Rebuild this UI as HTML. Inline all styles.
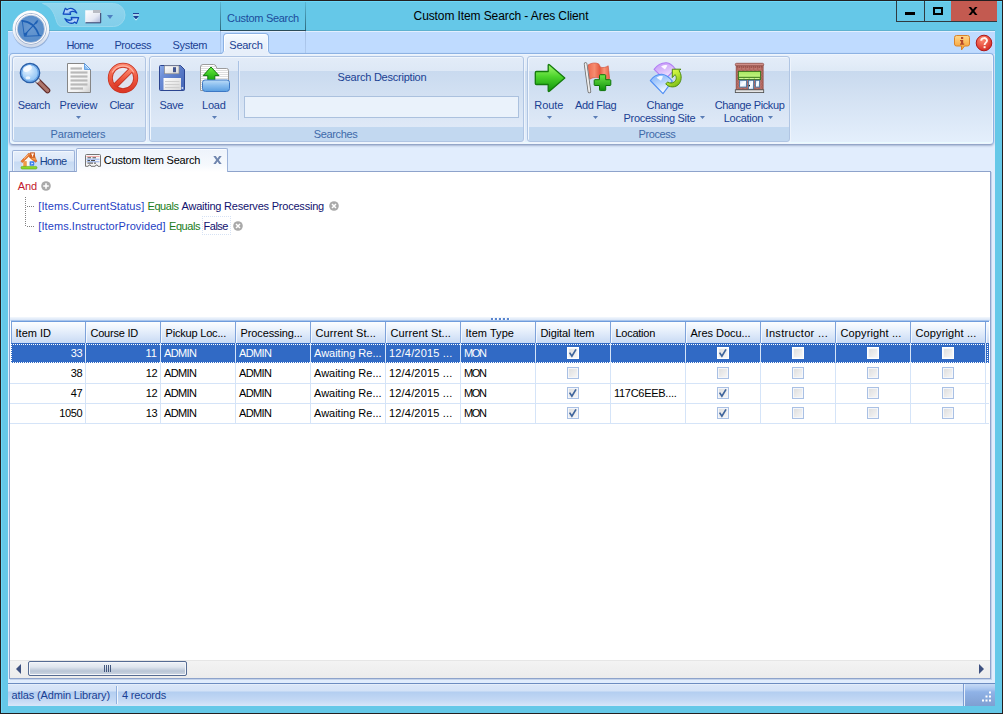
<!DOCTYPE html>
<html>
<head>
<meta charset="utf-8">
<title>Custom Item Search - Ares Client</title>
<style>
*{box-sizing:border-box;margin:0;padding:0}
html,body{width:1003px;height:714px;overflow:hidden}
body{position:relative;background:#65c8e8;font-family:"Liberation Sans",sans-serif;font-size:11px;color:#1a3f93}
.a{position:absolute}
.t{position:absolute;white-space:pre;line-height:14px;height:14px}
.c{text-align:center}
/* frame */
#frame{left:0;top:0;width:1003px;height:714px;border:1px solid #231f20}
#hl{left:1px;top:1px;width:1001px;height:712px;border-top:1px solid #6dd8f9;border-left:1px solid #6dd8f9}
#title{left:301px;top:9px;width:400px;font-size:12px;color:#000;letter-spacing:-0.1px}
/* window buttons */
#wb{left:896px;top:1px;width:101px;height:21px;border:1px solid #2f3a40;border-top:none}
#wb .d{top:0;width:1px;height:20px;background:#2f3a40}
#close{left:54px;top:0;width:46px;height:20px;background:#c35a50}
/* ribbon header */
#tabrow{left:8px;top:30px;width:987px;height:24px;background:#bfdbff;border-top:1px solid #5eb2d0;box-shadow:inset 0 1px 0 #e2efff}
#below{left:8px;top:54px;width:987px;height:652px;background:#bfdbff}
.tab{font-size:11px;color:#1a3f93}
/* ribbon panel */
#rib{left:9px;top:53px;width:985px;height:92px;border:1px solid #8db2e3;border-bottom-color:#94a6c8;border-radius:4px;background:linear-gradient(#e9f1fb 0,#dee9f6 17px,#c8d9ee 17px,#d4e2f3 45px,#e4effc 88px);box-shadow:inset 0 0 0 1px #eef5fd,inset 0 -2px 0 #e8fbff,0 1px 2px rgba(110,130,170,.5)}
.grp{top:56px;height:86px;border:1px solid #b0c5e3;border-radius:3px;background:linear-gradient(#e3ecf8 0,#dde8f6 14px,#c9daef 14px,#d7e4f4 50px,#dfe9f7 70px,#c2d8f0 70px,#c2d8f0 100%);box-shadow:inset 1px 1px 0 #f0f6fd,1px 1px 0 #eef4fc}
.cap{color:#3e6aaa}

#below{background:#e1edfd}
.dt{border:1px solid #9db3d9;border-bottom:none;border-radius:2px 2px 0 0}
#panel{left:9px;top:171px;width:982px;height:508px;border:1px solid #8ea3cb;background:#fff;box-shadow:1px 1px 0 #c3d2ea}
.k{color:#000}
.fn{color:#1f3fc4}.eq{color:#1a7c1a}.vl{color:#12126e}
.gh{color:#000}
.gc{color:#000}.gc.w{color:#fff}
.cb{width:12px;height:12px;border:1px solid #a9c0e4;background:linear-gradient(135deg,#dcdcdc,#f8f8f8);box-shadow:inset 0 0 0 1px #f4f6fa}
.cb.sel{border-color:#fff}
.cb svg{position:absolute;left:-1px;top:-1px}
</style>
</head>
<body>
<div class="a" id="frame"></div>
<div class="a" id="hl"></div>
<div class="t c" id="title">Custom Item Search - Ares Client</div>

<!-- window buttons -->
<div class="a" id="wb">
  <div class="a d" style="left:27px"></div>
  <div class="a" id="close"></div>
  <div class="a" style="left:8px;top:11px;width:10px;height:3px;background:#000"></div>
  <div class="a" style="left:36px;top:6px;width:10px;height:8px;border:2px solid #000"></div>
  <svg class="a" style="left:71px;top:6px" width="10" height="8" viewBox="0 0 10 8"><path d="M0.5 0H3L5 2.6L7 0H9.5L6.3 4L9.5 8H7L5 5.4L3 8H0.5L3.7 4Z" fill="#000"/></svg>
</div>

<div class="a" id="tabrow"></div>
<div class="a" id="below"></div>



<!-- app button -->
<svg class="a" style="z-index:5;left:10px;top:8px" width="42" height="42" viewBox="0 0 42 42">
 <defs>
  <linearGradient id="ab1" x1="0" y1="0" x2="0" y2="1"><stop offset="0" stop-color="#ffffff"/><stop offset="0.55" stop-color="#f2f5fa"/><stop offset="1" stop-color="#cbd6e8"/></linearGradient>
  <radialGradient id="ab2" cx="0.5" cy="0.45" r="0.7"><stop offset="0" stop-color="#6a9ad2"/><stop offset="1" stop-color="#5288c6"/></radialGradient>
 </defs>
 <circle cx="21.2" cy="21.6" r="18.8" fill="#4f6fa0" opacity="0.4"/>
 <circle cx="20.9" cy="20.9" r="18.4" fill="url(#ab1)"/>
 <circle cx="20.9" cy="20.9" r="15.5" fill="none" stroke="#9fb1cf" stroke-width="0.9"/>
 <circle cx="20.9" cy="20.9" r="14.5" fill="none" stroke="#ffffff" stroke-width="1"/>
 <circle cx="20.9" cy="20.9" r="13.6" fill="none" stroke="#a4b6d4" stroke-width="0.8"/>
 <circle cx="20.9" cy="20.9" r="13.1" fill="url(#ab2)"/>
 <g fill="none" stroke="#1d5fb4" stroke-linecap="round">
  <path d="M12.2 12.8 Q24 13.6 28.9 27" stroke-width="1.7"/>
  <path d="M12.2 12.5 L14.4 28.3 L30.9 27.6" stroke-width="0.9"/>
  <path d="M15.7 25.7 L26.4 14.1" stroke-width="1.1"/>
 </g>
 <path d="M27.8 12.4 C27.6 14.4 26.6 15.6 25 16 C25.2 14.2 26.2 13 27.8 12.4 Z" fill="#1d5fb4" stroke="#1d5fb4" stroke-width="0.6"/>
 <path d="M13.8 25.2 L17.6 24.2 L16.6 27.8 L14.4 28 Z" fill="#1d5fb4"/>
</svg>

<!-- QAT -->
<svg class="a" style="left:36px;top:2px" width="92" height="26" viewBox="0 0 92 26">
 <defs><linearGradient id="qp" x1="0" y1="0" x2="0" y2="1"><stop offset="0" stop-color="#90d5ed"/><stop offset="1" stop-color="#82ceea"/></linearGradient></defs>
 <path d="M6.5 1.5 H77.5 A11.5 11.5 0 0 1 77.5 24.5 H26 C20 24.5 21 17 17 10 C14 5 10 2.5 6.5 1.5 Z" fill="url(#qp)" stroke="#97d8ee" stroke-width="1"/>
</svg>
<!-- refresh icon -->
<svg class="a" style="left:62px;top:7px" width="18" height="18" viewBox="0 0 18 18">
 <defs><linearGradient id="rf" x1="0" y1="0" x2="1" y2="1"><stop offset="0" stop-color="#ffffff"/><stop offset="0.5" stop-color="#9cc8f8"/><stop offset="1" stop-color="#3c84e4"/></linearGradient></defs>
 <path d="M1.2 7 L3.3 1.3 L5 2.8 C8.2 0.2 12.8 1.4 14.8 6 C12.2 4.2 9.6 4.2 8 5.2 L8.6 7.4 Z" fill="url(#rf)" stroke="#124cc0" stroke-width="1.3" stroke-linejoin="round"/>
 <g transform="rotate(180 8.9 8.85)"><path d="M1.2 7 L3.3 1.3 L5 2.8 C8.2 0.2 12.8 1.4 14.8 6 C12.2 4.2 9.6 4.2 8 5.2 L8.6 7.4 Z" fill="url(#rf)" stroke="#124cc0" stroke-width="1.3" stroke-linejoin="round"/></g>
</svg>
<!-- window/folder icon -->
<svg class="a" style="left:85px;top:9px" width="17" height="15" viewBox="0 0 17 15">
 <defs><linearGradient id="fo" x1="0" y1="0" x2="1" y2="1"><stop offset="0" stop-color="#ffffff"/><stop offset="0.6" stop-color="#e4e8f4"/><stop offset="1" stop-color="#a9b4d6"/></linearGradient></defs>
 <path d="M0.5 1.5H8V4H15.5V13.5H0.5Z" fill="url(#fo)" stroke="#f4f7fc" stroke-width="0.6"/>
 <rect x="8" y="1" width="7.5" height="3" fill="#b9bcc4"/>
 <path d="M0.5 13.8H15.7V4" fill="none" stroke="#2a3566" stroke-width="1"/>
</svg>
<svg class="a" style="left:107px;top:15px" width="6" height="4" viewBox="0 0 6 4"><path d="M0 0H6L3 4Z" fill="#4d7fc0"/></svg>
<svg class="a" style="left:133px;top:13px" width="6" height="8" viewBox="0 0 6 8"><rect x="0" y="0" width="6" height="1.3" fill="#1f3f95"/><rect x="0" y="1.4" width="6" height="1" fill="#e8f4fb"/><path d="M0 3H6L3 6.3Z" fill="#1f3f95"/><path d="M0 4.3L3 7.6L6 4.3L3 6.6Z" fill="#f4fbff"/></svg>

<!-- context tab -->
<div class="a" style="left:220px;top:2px;width:1px;height:52px;background:linear-gradient(#5ab6d4,#2f6a7e 28px,#a5c0e6 29px,#afcaee)"></div>
<div class="a" style="left:305px;top:2px;width:1px;height:52px;background:linear-gradient(#5ab6d4,#2f6a7e 28px,#a5c0e6 29px,#afcaee)"></div>
<div class="a" style="left:220px;top:30px;width:86px;height:1px;background:#2a4c5a"></div>
<div class="t c" style="left:221px;top:11px;width:84px;color:#1c4c9c;letter-spacing:-0.3px">Custom Search</div>

<!-- ribbon tabs -->
<div class="t tab" style="left:66.6px;top:38px;letter-spacing:-0.68px">Home</div>
<div class="t tab" style="left:114.5px;top:38px;letter-spacing:-0.47px">Process</div>
<div class="t tab" style="left:172.6px;top:38px;letter-spacing:-0.35px">System</div>
<div class="a" style="z-index:3;left:223px;top:33px;width:46px;height:18px;border:1px solid #8db2e3;border-bottom:none;border-radius:4px 4px 0 0;background:linear-gradient(#f7fbff,#e9f1fb 60%,#e7effa);box-shadow:inset 1px 1px 0 #fff,inset -1px 0 0 #f4f9ff"></div><div class="a" style="z-index:3;left:224px;top:51px;width:44px;height:4px;background:#e7effa"></div>
<div class="t tab" style="z-index:4;left:229.3px;top:38px;letter-spacing:-0.25px">Search</div>

<svg class="a" style="z-index:4;left:220px;top:50px" width="4" height="4" viewBox="0 0 4 4"><path d="M0 4 H4 V0 C4 2.5 2.5 4 0 4 Z" fill="#e6effa"/><path d="M0 3.5 C2.2 3.5 3.5 2.2 3.5 0" fill="none" stroke="#8db2e3" stroke-width="1"/></svg>
<svg class="a" style="z-index:4;left:268px;top:50px" width="4" height="4" viewBox="0 0 4 4"><path d="M4 4 H0 V0 C0 2.5 1.5 4 4 4 Z" fill="#e6effa"/><path d="M4 3.5 C1.8 3.5 0.5 2.2 0.5 0" fill="none" stroke="#8db2e3" stroke-width="1"/></svg>
<!-- help icons -->
<svg class="a" style="left:953px;top:34px" width="18" height="18" viewBox="0 0 18 18">
 <defs><linearGradient id="ib" x1="0" y1="0" x2="0" y2="1"><stop offset="0" stop-color="#ffd78a"/><stop offset="1" stop-color="#f59a2c"/></linearGradient></defs>
 <path d="M3.5 1.5H14.5Q16.5 1.5 16.5 3.5V10Q16.5 12 14.5 12H11.5L8.5 16V12H3.5Q1.5 12 1.5 10V3.5Q1.5 1.5 3.5 1.5Z" fill="url(#ib)" stroke="#d9822a" stroke-width="1"/>
 <rect x="8" y="3" width="2.2" height="2" fill="#b5482a"/><path d="M7 6H10.2V9.5H11.2V10.8H7V9.5H8V7.3H7Z" fill="#b5482a"/>
</svg>
<svg class="a" style="left:975px;top:34px" width="18" height="18" viewBox="0 0 18 18">
 <defs><radialGradient id="hb" cx="0.4" cy="0.3" r="0.8"><stop offset="0" stop-color="#ff8a70"/><stop offset="1" stop-color="#d0201a"/></radialGradient></defs>
 <circle cx="9" cy="9" r="7.8" fill="url(#hb)" stroke="#b01818" stroke-width="1"/>
 <path d="M6.2 6.8C6.2 3.2 12 3.2 12 6.6C12 8.6 9.6 8.8 9.6 11" fill="none" stroke="#fff4ec" stroke-width="1.9"/><rect x="8.6" y="12.2" width="2" height="2" fill="#fff4ec"/>
</svg>

<!-- ribbon -->
<div class="a" id="rib"></div>
<div class="a grp" style="left:12px;width:134px"></div>
<div class="a grp" style="left:149px;width:375px"></div>
<div class="a grp" style="left:527px;width:263px"></div>


<!-- ===== ribbon icons ===== -->
<!-- Search magnifier -->
<svg class="a" style="left:19px;top:62px" width="33" height="33" viewBox="0 0 33 33">
 <defs>
  <radialGradient id="mg" cx="0.4" cy="0.35" r="0.8"><stop offset="0" stop-color="#e8f4ff"/><stop offset="0.5" stop-color="#a9d2f8"/><stop offset="1" stop-color="#78b4f0"/></radialGradient>
  <linearGradient id="mh" x1="0" y1="1" x2="1" y2="0"><stop offset="0" stop-color="#6d2f2c"/><stop offset="0.5" stop-color="#b07a70"/><stop offset="1" stop-color="#7a3a34"/></linearGradient>
 </defs>
 <path d="M19 19 L28.5 28.5" stroke="#5c2624" stroke-width="5.6" stroke-linecap="round"/>
 <path d="M19 19 L28.5 28.5" stroke="url(#mh)" stroke-width="3.6" stroke-linecap="round"/>
 <path d="M16.8 16.8 L19.6 19.6" stroke="#8a8f9c" stroke-width="5"/>
 <path d="M16.8 16.8 L19.6 19.6" stroke="#dfe3ea" stroke-width="3.4"/>
 <circle cx="11" cy="11" r="9.6" fill="url(#mg)" stroke="#2a5fa8" stroke-width="1.5"/>
 <circle cx="11" cy="11" r="8.3" fill="none" stroke="#5e9fe6" stroke-width="1"/>
 <ellipse cx="8.5" cy="6.5" rx="4.6" ry="2.8" fill="#fff" opacity="0.8" transform="rotate(-25 8.5 6.5)"/>
 <ellipse cx="9" cy="15.8" rx="2.4" ry="1.5" fill="#fff" opacity="0.75"/>
</svg>
<!-- Preview doc -->
<svg class="a" style="left:66px;top:62px" width="27" height="33" viewBox="0 0 27 33">
 <defs><linearGradient id="pg" x1="0" y1="0" x2="1" y2="1"><stop offset="0" stop-color="#ffffff"/><stop offset="0.7" stop-color="#f2f2f2"/><stop offset="1" stop-color="#cdcdcd"/></linearGradient></defs>
 <path d="M1.5 1.5 H18.5 L24.5 7.5 V30.5 H1.5 Z" fill="url(#pg)" stroke="#868686" stroke-width="1"/>
 <path d="M18.5 1.5 L24.5 7.5 H18.5 Z" fill="#8cc0f4" stroke="#4f94e2" stroke-width="0.8"/>
 <path d="M19 3 L23 7" stroke="#e8f4ff" stroke-width="0.8"/>
 <g stroke="#b9b9b9" stroke-width="2.2"><path d="M4.5 6.5H16"/><path d="M4.5 10.5H21.5"/><path d="M4.5 14.5H21.5"/><path d="M4.5 18.5H21.5"/><path d="M4.5 22.5H21.5"/><path d="M4.5 26.5H17"/></g>
</svg>
<!-- Clear -->
<svg class="a" style="left:107px;top:62px" width="33" height="33" viewBox="0 0 33 33">
 <defs><linearGradient id="cl" x1="0" y1="0" x2="0" y2="1"><stop offset="0" stop-color="#fb846c"/><stop offset="0.5" stop-color="#ee5a42"/><stop offset="1" stop-color="#dc3826"/></linearGradient></defs>
 <circle cx="16" cy="16" r="13" fill="#f4e6ea" opacity="0.45"/>
 <path d="M8 24 L24 8" stroke="#c4301e" stroke-width="5.4"/>
 <circle cx="16" cy="16" r="12.7" fill="none" stroke="#c4301e" stroke-width="5"/>
 <circle cx="16" cy="16" r="12.7" fill="none" stroke="url(#cl)" stroke-width="3.6"/>
 <path d="M7.6 24.4 L24.4 7.6" stroke="url(#cl)" stroke-width="4"/>
 <path d="M5.2 10.5 A12.2 12.2 0 0 1 26.8 10.5" fill="none" stroke="#ffc0b0" stroke-width="1.2" opacity="0.8"/>
</svg>
<!-- Save floppy -->
<svg class="a" style="left:158px;top:64px" width="28" height="28" viewBox="0 0 28 28">
 <defs><linearGradient id="fl" x1="0" y1="0" x2="1" y2="0.6"><stop offset="0" stop-color="#8fb0ec"/><stop offset="0.25" stop-color="#6f90d8"/><stop offset="1" stop-color="#4a6cbc"/></linearGradient>
 <linearGradient id="fw" x1="0" y1="0" x2="1" y2="1"><stop offset="0" stop-color="#ffffff"/><stop offset="1" stop-color="#d6d6d6"/></linearGradient></defs>
 <path d="M2.5 1.5 H22.5 L26.5 5.5 V25.5 Q26.5 26.5 25.5 26.5 H2.5 Q1.5 26.5 1.5 25.5 V2.5 Q1.5 1.5 2.5 1.5 Z" fill="url(#fl)" stroke="#2c4590" stroke-width="1"/>
 <rect x="6.5" y="1.8" width="14.5" height="8" fill="url(#fw)" stroke="#8a8a8a" stroke-width="0.7"/>
 <rect x="15" y="3.2" width="3" height="5" fill="#40548e"/>
 <rect x="5.5" y="14" width="17.5" height="12" fill="url(#fw)"/>
 <g stroke="#cfcfcf" stroke-width="1"><path d="M7 17.5H21.5"/><path d="M7 20.5H21.5"/><path d="M7 23.5H21.5"/></g>
 <rect x="23.6" y="23.2" width="1.6" height="1.6" fill="#e8eefc"/>
</svg>
<!-- Load folder -->
<svg class="a" style="left:199px;top:63px" width="32" height="30" viewBox="0 0 32 30">
 <defs><linearGradient id="lf" x1="0" y1="0" x2="0" y2="1"><stop offset="0" stop-color="#bcdcf8"/><stop offset="0.5" stop-color="#86bcee"/><stop offset="1" stop-color="#5a9ee0"/></linearGradient>
 <linearGradient id="ga" x1="0" y1="0" x2="0" y2="1"><stop offset="0" stop-color="#6cf040"/><stop offset="1" stop-color="#10a008"/></linearGradient>
 <pattern id="st" width="2" height="2" patternUnits="userSpaceOnUse"><rect width="2" height="1" fill="#ffffff"/><rect y="1" width="2" height="1" fill="#dedede"/></pattern></defs>
 <path d="M1.5 4 Q1.5 1.5 4 1.5 H14.5 Q16.5 1.5 17.2 3.5 L17.8 5.5 H27.5 Q29.5 5.5 29.5 7.5 V27.5 H1.5 Z" fill="url(#st)" stroke="#9c9c9c" stroke-width="1"/>
 <path d="M12 4 L20 12.6 H15.8 V18 H8.8 V12.6 H4.2 Z" fill="url(#ga)" stroke="#0f7a0a" stroke-width="1" stroke-linejoin="round"/>
 <path d="M3.5 19.5 Q3.5 17 6 17 H28 Q30.5 17 30.5 19.5 V25.5 Q30.5 28.5 27.5 28.5 H6.5 Q3.5 28.5 3.5 25.5 Z" fill="url(#lf)" stroke="#3c78c4" stroke-width="1"/>
</svg>
<!-- Route arrow -->
<svg class="a" style="left:534px;top:63px" width="33" height="30" viewBox="0 0 33 30">
 <defs><linearGradient id="ra" x1="0" y1="0" x2="0" y2="1"><stop offset="0" stop-color="#a4f870"/><stop offset="0.45" stop-color="#4cd42c"/><stop offset="1" stop-color="#0e920a"/></linearGradient></defs>
 <path d="M2.5 8.5 H14.2 V2.2 Q14.2 1 15.4 1.8 L30.8 15 L15.4 28.2 Q14.2 29 14.2 27.8 V21.5 H2.5 Q1.3 21.5 1.3 20.3 V9.7 Q1.3 8.5 2.5 8.5 Z" fill="url(#ra)" stroke="#137a0c" stroke-width="1.3" stroke-linejoin="round"/>
</svg>
<!-- Add Flag -->
<svg class="a" style="left:582px;top:62px" width="31" height="32" viewBox="0 0 31 32">
 <defs><linearGradient id="fg" x1="0" y1="0" x2="1" y2="0"><stop offset="0" stop-color="#ee6a50"/><stop offset="0.3" stop-color="#f68c70"/><stop offset="0.55" stop-color="#e45a40"/><stop offset="0.75" stop-color="#f89678"/><stop offset="1" stop-color="#e8644a"/></linearGradient>
 <linearGradient id="gp" x1="0" y1="0" x2="0" y2="1"><stop offset="0" stop-color="#70e848"/><stop offset="1" stop-color="#0e900a"/></linearGradient></defs>
 <path d="M6 3 C9 0.8 13.5 0.4 16.5 1.8 C17.5 2.6 18 4.4 18.2 5 C20.5 6.2 24 5.4 26.2 3.8 L27.6 16.5 C24.5 19 20.5 19 18.5 17.2 C15.5 14.8 11.5 15 7.8 17.2 Z" fill="url(#fg)" stroke="#cf4a34" stroke-width="0.6"/>
 <path d="M3.6 2 L7.4 29.5" stroke="#707070" stroke-width="3.6" stroke-linecap="round"/>
 <path d="M3.6 2 L7.4 29.5" stroke="#ececec" stroke-width="1.9" stroke-linecap="round"/>
 <path d="M18.3 12.7 H22.9 Q23.7 12.7 23.7 13.5 V17.7 H28 Q28.8 17.7 28.8 18.5 V22.7 Q28.8 23.5 28 23.5 H23.7 V27.8 Q23.7 28.6 22.9 28.6 H18.3 Q17.5 28.6 17.5 27.8 V23.5 H13 Q12.2 23.5 12.2 22.7 V18.5 Q12.2 17.7 13 17.7 H17.5 V13.5 Q17.5 12.7 18.3 12.7 Z" fill="url(#gp)" stroke="#0d7408" stroke-width="1" stroke-linejoin="round"/>
</svg>
<!-- Change Processing Site -->
<svg class="a" style="left:649px;top:61px" width="34" height="34" viewBox="0 0 34 34">
 <defs><linearGradient id="pu" x1="0.2" y1="0" x2="0.7" y2="1"><stop offset="0" stop-color="#c79af8"/><stop offset="0.45" stop-color="#d9bcfb"/><stop offset="1" stop-color="#fbf6ff"/></linearGradient>
 <linearGradient id="bl" x1="0.2" y1="0" x2="0.6" y2="1"><stop offset="0" stop-color="#7fb2fa"/><stop offset="0.45" stop-color="#b4d2fc"/><stop offset="1" stop-color="#ffffff"/></linearGradient>
 <linearGradient id="gr" x1="0" y1="0" x2="0.6" y2="1"><stop offset="0" stop-color="#eeff5c"/><stop offset="0.5" stop-color="#c0ec38"/><stop offset="1" stop-color="#7fc01a"/></linearGradient></defs>
 <path d="M5.1 8.4 C8.5 3.8 13 1.6 17.5 1.8 C21 2.2 24 5 26.3 8 L15.8 18.6 Z" fill="url(#pu)" stroke="#b07cf4" stroke-width="1.1" stroke-linejoin="round"/>
 <path d="M12 5.5 L16 8.5 L18.5 4.5 C16 3.6 14 4 12 5.5 Z" fill="#fff" opacity="0.9"/>
 <path d="M1.3 19.5 C4.5 15 9 13 13 13.2 C17 13.6 20.5 16.5 23.3 20.1 L14 32.6 Z" fill="url(#bl)" stroke="#4f8ef4" stroke-width="1.1" stroke-linejoin="round"/>
 <path d="M7.5 16.8 L12 19.8 L14 15.5 C11.5 14.6 9.5 15.2 7.5 16.8 Z" fill="#fff" opacity="0.9"/>
 <path d="M16.7 22.8 C20 26.8 27 27.2 30.4 22.4 C33 18.4 32.6 13.2 30 9.6 L32 8.2 L23.3 8.2 L23.3 16.6 L26 13.6 C28 16 27.5 19 25.5 20.8 C23.5 22.4 20.5 22.4 18.8 21 Z" fill="url(#gr)" stroke="#4e8c10" stroke-width="1" stroke-linejoin="round"/>
</svg>
<!-- Shop -->
<svg class="a" style="left:734px;top:62px" width="31" height="32" viewBox="0 0 31 32">
 <defs><linearGradient id="aw" x1="0" y1="0" x2="0" y2="1"><stop offset="0" stop-color="#a8e860"/><stop offset="0.5" stop-color="#baf078"/><stop offset="1" stop-color="#96d64c"/></linearGradient>
 <linearGradient id="wn" x1="0" y1="0" x2="1" y2="1"><stop offset="0" stop-color="#b8d8f8"/><stop offset="0.5" stop-color="#ffffff"/><stop offset="1" stop-color="#c4e0fa"/></linearGradient>
 <pattern id="bk" width="4" height="3" patternUnits="userSpaceOnUse"><rect width="4" height="3" fill="#b0645c"/><rect x="0.3" y="0.4" width="2.6" height="1" fill="#c8867e"/><rect x="2.3" y="1.9" width="2.6" height="1" fill="#c07a72" opacity=".7"/></pattern></defs>
 <rect x="2.2" y="3.4" width="26.9" height="24.2" fill="url(#bk)" stroke="#8a443e" stroke-width="0.8"/>
 <rect x="1.3" y="1.3" width="28.4" height="2.5" rx="1.2" fill="#cf8e88" stroke="#8e4c46" stroke-width="0.8"/>
 <path d="M3 5H28" stroke="#8a443e" stroke-width="1" stroke-dasharray="1 1"/>
 <rect x="4.4" y="9.4" width="22.2" height="8.2" fill="url(#aw)" stroke="#3a7620" stroke-width="1"/>
 <path d="M5 15.4H26" stroke="#3a7620" stroke-width="0.9"/>
 <path d="M5.4 16.5H26" stroke="#d4f8a0" stroke-width="0.9" stroke-dasharray="4 1.2"/>
 <rect x="5.6" y="18.3" width="7" height="6.8" fill="url(#wn)" stroke="#46749f" stroke-width="0.9"/>
 <rect x="14.4" y="18.3" width="5.2" height="9" fill="url(#wn)" stroke="#46749f" stroke-width="0.9"/>
 <rect x="21.4" y="18.3" width="4.2" height="6.8" fill="url(#wn)" stroke="#46749f" stroke-width="0.9"/>
 <ellipse cx="15.4" cy="23.6" rx="0.6" ry="0.9" fill="#111"/>
 <rect x="1.3" y="27.8" width="28.4" height="2.8" fill="#e4e4e4" stroke="#4c4c4c" stroke-width="0.8"/>
</svg>


<!-- ribbon labels -->
<div class="t " style="left:17.8px;top:98px;letter-spacing:-0.48px">Search</div>
<div class="t " style="left:59.6px;top:98px;letter-spacing:-0.22px">Preview</div>
<div class="t " style="left:109.5px;top:98px;letter-spacing:-0.40px">Clear</div>
<div class="t cap" style="left:50.6px;top:127px;letter-spacing:-0.21px">Parameters</div>
<div class="t " style="left:159.4px;top:98px;letter-spacing:-0.27px">Save</div>
<div class="t " style="left:202.1px;top:98px;letter-spacing:-0.25px">Load</div>
<div class="t " style="left:337.6px;top:70px;letter-spacing:-0.23px">Search Description</div>
<div class="t cap" style="left:313.8px;top:127px;letter-spacing:-0.36px">Searches</div>
<div class="t " style="left:534.3px;top:98px;letter-spacing:-0.07px">Route</div>
<div class="t " style="left:575.0px;top:98px;letter-spacing:-0.33px">Add Flag</div>
<div class="t " style="left:646.5px;top:98px;letter-spacing:-0.26px">Change</div>
<div class="t " style="left:623.6px;top:111px;letter-spacing:-0.32px">Processing Site</div>
<div class="t " style="left:714.7px;top:98px;letter-spacing:-0.37px">Change Pickup</div>
<div class="t " style="left:723.8px;top:111px;letter-spacing:-0.29px">Location</div>
<div class="t cap" style="left:638.6px;top:127px;letter-spacing:-0.44px">Process</div>
<svg class="a" style="left:76px;top:116px" width="5" height="3" viewBox="0 0 5 3"><path d="M0 0H5L2.5 3Z" fill="#5a7db6"/></svg>
<svg class="a" style="left:212px;top:116px" width="5" height="3" viewBox="0 0 5 3"><path d="M0 0H5L2.5 3Z" fill="#5a7db6"/></svg>
<svg class="a" style="left:547px;top:116px" width="5" height="3" viewBox="0 0 5 3"><path d="M0 0H5L2.5 3Z" fill="#5a7db6"/></svg>
<svg class="a" style="left:593px;top:116px" width="5" height="3" viewBox="0 0 5 3"><path d="M0 0H5L2.5 3Z" fill="#5a7db6"/></svg>
<svg class="a" style="left:700px;top:116px" width="5" height="3" viewBox="0 0 5 3"><path d="M0 0H5L2.5 3Z" fill="#5a7db6"/></svg>
<svg class="a" style="left:768px;top:116px" width="5" height="3" viewBox="0 0 5 3"><path d="M0 0H5L2.5 3Z" fill="#5a7db6"/></svg>

<div class="a" style="left:238px;top:61px;width:1px;height:59px;background:#a9c2e4"></div>
<div class="a" style="left:239px;top:61px;width:1px;height:59px;background:#e6eefa"></div>
<div class="a" style="left:244px;top:96px;width:275px;height:22px;border:1px solid #abc1de;background:#eaf2fb"></div>


<!-- ===== document tabs ===== -->
<div class="a dt" style="left:12px;top:150px;width:63px;height:22px;background:linear-gradient(#e6effb 0,#dbe7f8 10px,#c6daf3 11px,#d2e2f6 100%);box-shadow:inset 1px 1px 0 #f2f7fd"></div>
<div class="a" id="panel"></div>
<div class="a dt" style="left:76px;top:148px;width:152px;height:24px;background:linear-gradient(#eef3fb,#f6f9fd 70%,#fff);box-shadow:inset 1px 1px 0 #fbfdff"></div>
<div class="t" style="left:39.7px;top:154px;color:#15428b;letter-spacing:-0.65px">Home</div>
<div class="t k" style="left:103.8px;top:153px;letter-spacing:-0.22px" id="cis">Custom Item Search</div>
<svg class="a" style="left:213px;top:156px" width="9" height="8" viewBox="0 0 9 8"><path d="M0.3 0H2.8L4.5 2.5L6.2 0H8.7L5.8 4L8.7 8H6.2L4.5 5.5L2.8 8H0.3L3.2 4Z" fill="#7086ae"/></svg>
<!-- home icon -->
<svg class="a" style="left:20px;top:152px" width="18" height="18" viewBox="0 0 18 18">
 <path d="M2.5 9.5 L8.5 3 L15 8.5 V15 H2.5 Z" fill="#fbf8f2"/>
 <path d="M0.9 9.3 L8.3 1.6 L11 3.4 L16.8 9.2 L15.4 10.2 L8.6 4.6 L2.4 10.6 Z" fill="#ee7a30" stroke="#c85a18" stroke-width="0.6"/>
 <path d="M8.3 1.6 L13.4 1 L16.8 9.2 L12 7.6 Z" fill="#f49a50" stroke="#c85a18" stroke-width="0.5"/>
 <path d="M4 6.6 L8.4 2.4" stroke="#ffe0c0" stroke-width="0.8"/>
 <rect x="10.4" y="0.8" width="4.4" height="4.6" fill="#d8601e" stroke="#b84c12" stroke-width="0.4"/><path d="M11.2 2H14M12.6 2V4.6" stroke="#fff" stroke-width="1"/>
 <rect x="3.6" y="9.4" width="2.8" height="5" fill="#f29a44" stroke="#d87a24" stroke-width="0.4"/>
 <rect x="9.6" y="9.2" width="4.8" height="4.6" rx="0.6" fill="#3a80ec"/><path d="M11.4 10.4L13.3 11.5L11.4 12.6Z" fill="#fff"/>
 <rect x="1" y="14.4" width="16" height="2.6" rx="1.2" fill="#8ad828" stroke="#5ca410" stroke-width="0.6"/>
</svg>
<!-- search tab icon -->
<svg class="a" style="left:85px;top:154px" width="17" height="13" viewBox="0 0 17 13">
 <path d="M1.5 0.5 H14.5 Q15.5 0.5 15.5 1.5 V12.3 H13 L12.2 11 H11 L10.2 12.3 H6 L5.2 11 H4 L3.2 12.3 H0.5 V1.5 Q0.5 0.5 1.5 0.5 Z" fill="#f6f6f6" stroke="#747474" stroke-width="1"/>
 <g stroke-width="1"><path d="M1.5 2.5H14.5" stroke="#f2aaaa"/><path d="M2.5 3.8H6M7.5 3.8H11" stroke="#4a4a4a"/><path d="M1.5 5.2H14.5" stroke="#8cacec"/><path d="M2.5 6.5H5M6 6.5H10" stroke="#4a4a4a"/><path d="M1.5 7.8H14.5" stroke="#8cacec"/><path d="M2.5 9.1H8M9 9.1H11" stroke="#4a4a4a"/></g>
</svg>

<!-- ===== filter tree ===== -->
<div class="t" style="left:17.8px;top:179px;color:#c2182c;letter-spacing:-0.1px">And</div>
<svg class="a" style="left:41px;top:181px" width="10" height="10" viewBox="0 0 10 10"><circle cx="5" cy="5" r="4.8" fill="#a9a9a9"/><path d="M5 2.2V7.8M2.2 5H7.8" stroke="#fff" stroke-width="1.6"/></svg>
<div class="a" style="left:25px;top:197px;width:1px;height:30px;background:repeating-linear-gradient(#808080 0 1px,transparent 1px 2px)"></div>
<div class="a" style="left:26px;top:206px;width:9px;height:1px;background:repeating-linear-gradient(90deg,transparent 0 1px,#808080 1px 2px)"></div>
<div class="a" style="left:26px;top:226px;width:9px;height:1px;background:repeating-linear-gradient(90deg,transparent 0 1px,#808080 1px 2px)"></div>
<div class="t fn" style="left:38.3px;top:199px;letter-spacing:0.10px" id="f1">[Items.CurrentStatus]</div>
<div class="t eq" style="left:147.5px;top:199px;letter-spacing:-0.44px" id="e1">Equals</div>
<div class="t vl" style="left:181.5px;top:199px;letter-spacing:-0.21px" id="v1">Awaiting Reserves Processing</div>
<svg class="a" style="left:329px;top:201px" width="10" height="10" viewBox="0 0 10 10"><circle cx="5" cy="5" r="4.8" fill="#a9a9a9"/><path d="M3 3L7 7M7 3L3 7" stroke="#fff" stroke-width="1.5"/></svg>
<div class="t fn" style="left:38.3px;top:219px;letter-spacing:0.08px" id="f2">[Items.InstructorProvided]</div>
<div class="t eq" style="left:169px;top:219px;letter-spacing:-0.44px" id="e2">Equals</div>
<div class="a" style="left:202px;top:216px;width:29px;height:19px;border:1px dotted #d6e2f4"></div>
<div class="t vl" style="left:203.5px;top:219px;letter-spacing:-0.48px" id="v2">False</div>
<svg class="a" style="left:233px;top:221px" width="10" height="10" viewBox="0 0 10 10"><circle cx="5" cy="5" r="4.8" fill="#a9a9a9"/><path d="M3 3L7 7M7 3L3 7" stroke="#fff" stroke-width="1.5"/></svg>

<!-- ===== splitter + grid ===== -->
<div class="a" style="left:10px;top:317px;width:980px;height:4px;background:linear-gradient(#f4f8fd,#cfdff5)"></div>
<div class="a" style="left:491px;top:318px;width:19px;height:2px;background:repeating-linear-gradient(90deg,#5a86cf 0 2px,#fff 2px 3px,transparent 3px 4px)"></div>
<div class="a" style="left:11px;top:320px;width:978px;height:23px;border-top:2px solid #6f9cdc;border-top-color:#6f9cdc;background:linear-gradient(#fdfeff 0,#e9f1fc 8px,#c8daf4 100%)"></div><div class="a" style="left:11px;top:320px;width:978px;height:1px;background:#a9c5ec"></div>
<div class="a" style="left:11px;top:322px;width:1px;height:21px;background:#7da2da"></div>
<div class="a" style="left:11px;top:343px;width:978px;height:20px;background:#316ac5"></div>
<div class="a" style="left:11px;top:344px;width:977px;height:1px;background:repeating-linear-gradient(90deg,#fff 0 1px,#316ac5 1px 2px)"></div><div class="a" style="left:11px;top:344px;width:1px;height:19px;background:repeating-linear-gradient(#fff 0 1px,#316ac5 1px 2px)"></div><div class="a" style="left:987px;top:344px;width:1px;height:19px;background:repeating-linear-gradient(#fff 0 1px,#316ac5 1px 2px)"></div>
<div class="a" style="left:11px;top:362px;width:977px;height:1px;background:repeating-linear-gradient(90deg,#fff 0 1px,#316ac5 1px 2px)"></div>
<div class="a" style="left:10px;top:383px;width:979px;height:1px;background:#d5e4f8"></div>
<div class="a" style="left:10px;top:403px;width:979px;height:1px;background:#d5e4f8"></div>
<div class="a" style="left:10px;top:423px;width:979px;height:1px;background:#d5e4f8"></div>
<div class="a" style="left:85px;top:322px;width:1px;height:21px;background:#7da2da"></div><div class="a" style="left:86px;top:322px;width:1px;height:21px;background:#f4f8fe"></div><div class="a" style="left:85px;top:343px;width:1px;height:81px;background:#d5e4f8"></div><div class="a" style="left:160px;top:322px;width:1px;height:21px;background:#7da2da"></div><div class="a" style="left:161px;top:322px;width:1px;height:21px;background:#f4f8fe"></div><div class="a" style="left:160px;top:343px;width:1px;height:81px;background:#d5e4f8"></div><div class="a" style="left:235px;top:322px;width:1px;height:21px;background:#7da2da"></div><div class="a" style="left:236px;top:322px;width:1px;height:21px;background:#f4f8fe"></div><div class="a" style="left:235px;top:343px;width:1px;height:81px;background:#d5e4f8"></div><div class="a" style="left:310px;top:322px;width:1px;height:21px;background:#7da2da"></div><div class="a" style="left:311px;top:322px;width:1px;height:21px;background:#f4f8fe"></div><div class="a" style="left:310px;top:343px;width:1px;height:81px;background:#d5e4f8"></div><div class="a" style="left:385px;top:322px;width:1px;height:21px;background:#7da2da"></div><div class="a" style="left:386px;top:322px;width:1px;height:21px;background:#f4f8fe"></div><div class="a" style="left:385px;top:343px;width:1px;height:81px;background:#d5e4f8"></div><div class="a" style="left:460px;top:322px;width:1px;height:21px;background:#7da2da"></div><div class="a" style="left:461px;top:322px;width:1px;height:21px;background:#f4f8fe"></div><div class="a" style="left:460px;top:343px;width:1px;height:81px;background:#d5e4f8"></div><div class="a" style="left:535px;top:322px;width:1px;height:21px;background:#7da2da"></div><div class="a" style="left:536px;top:322px;width:1px;height:21px;background:#f4f8fe"></div><div class="a" style="left:535px;top:343px;width:1px;height:81px;background:#d5e4f8"></div><div class="a" style="left:610px;top:322px;width:1px;height:21px;background:#7da2da"></div><div class="a" style="left:611px;top:322px;width:1px;height:21px;background:#f4f8fe"></div><div class="a" style="left:610px;top:343px;width:1px;height:81px;background:#d5e4f8"></div><div class="a" style="left:685px;top:322px;width:1px;height:21px;background:#7da2da"></div><div class="a" style="left:686px;top:322px;width:1px;height:21px;background:#f4f8fe"></div><div class="a" style="left:685px;top:343px;width:1px;height:81px;background:#d5e4f8"></div><div class="a" style="left:760px;top:322px;width:1px;height:21px;background:#7da2da"></div><div class="a" style="left:761px;top:322px;width:1px;height:21px;background:#f4f8fe"></div><div class="a" style="left:760px;top:343px;width:1px;height:81px;background:#d5e4f8"></div><div class="a" style="left:835px;top:322px;width:1px;height:21px;background:#7da2da"></div><div class="a" style="left:836px;top:322px;width:1px;height:21px;background:#f4f8fe"></div><div class="a" style="left:835px;top:343px;width:1px;height:81px;background:#d5e4f8"></div><div class="a" style="left:910px;top:322px;width:1px;height:21px;background:#7da2da"></div><div class="a" style="left:911px;top:322px;width:1px;height:21px;background:#f4f8fe"></div><div class="a" style="left:910px;top:343px;width:1px;height:81px;background:#d5e4f8"></div><div class="a" style="left:985px;top:322px;width:1px;height:21px;background:#7da2da"></div><div class="a" style="left:986px;top:322px;width:1px;height:21px;background:#f4f8fe"></div><div class="a" style="left:985px;top:343px;width:1px;height:81px;background:#d5e4f8"></div><div class="t gh" style="left:15.5px;top:326px;letter-spacing:0.01px">Item ID</div>
<div class="t gh" style="left:90.5px;top:326px;letter-spacing:-0.23px">Course ID</div>
<div class="t gh" style="left:165.5px;top:326px;letter-spacing:-0.19px">Pickup Loc...</div>
<div class="t gh" style="left:240.5px;top:326px;letter-spacing:-0.12px">Processing...</div>
<div class="t gh" style="left:315.5px;top:326px;letter-spacing:0.09px">Current St...</div>
<div class="t gh" style="left:390.5px;top:326px;letter-spacing:0.09px">Current St...</div>
<div class="t gh" style="left:465.5px;top:326px;letter-spacing:0.04px">Item Type</div>
<div class="t gh" style="left:540.5px;top:326px;letter-spacing:-0.09px">Digital Item</div>
<div class="t gh" style="left:615.5px;top:326px;letter-spacing:-0.26px">Location</div>
<div class="t gh" style="left:690.5px;top:326px;letter-spacing:-0.04px">Ares Docu...</div>
<div class="t gh" style="left:765.5px;top:326px;letter-spacing:0.32px">Instructor ...</div>
<div class="t gh" style="left:840.5px;top:326px;letter-spacing:0.13px">Copyright ...</div>
<div class="t gh" style="left:915.5px;top:326px;letter-spacing:0.13px">Copyright ...</div>
<div class="t gc w" style="right:919.9px;top:346px;margin-right:0.8px;letter-spacing:-0.38px">33</div>
<div class="t gc w" style="right:845.3px;top:346px;margin-right:0.8px;letter-spacing:0.04px">11</div>
<div class="t gc w" style="left:164px;top:346px;letter-spacing:-0.61px">ADMIN</div>
<div class="t gc w" style="left:239px;top:346px;letter-spacing:-0.61px">ADMIN</div>
<div class="t gc w" style="left:314px;top:346px;letter-spacing:-0.01px">Awaiting Re...</div>
<div class="t gc w" style="left:389px;top:346px;letter-spacing:0.18px">12/4/2015 ...</div>
<div class="t gc w" style="left:464px;top:346px;letter-spacing:-1.39px">MON</div>
<div class="a cb on sel" style="left:567px;top:347px"><svg width="12" height="12" viewBox="0 0 12 12"><path d="M2.6 5.6L4.9 9.2L9 2.4" fill="none" stroke="#3f659c" stroke-width="1.7"/></svg></div>
<div class="a cb on sel" style="left:717px;top:347px"><svg width="12" height="12" viewBox="0 0 12 12"><path d="M2.6 5.6L4.9 9.2L9 2.4" fill="none" stroke="#3f659c" stroke-width="1.7"/></svg></div>
<div class="a cb sel" style="left:792px;top:347px"></div>
<div class="a cb sel" style="left:867px;top:347px"></div>
<div class="a cb sel" style="left:942px;top:347px"></div>
<div class="t gc" style="right:919.9px;top:366px;margin-right:0.8px;letter-spacing:-0.38px">38</div>
<div class="t gc" style="right:844.9px;top:366px;margin-right:0.8px;letter-spacing:-0.38px">12</div>
<div class="t gc" style="left:164px;top:366px;letter-spacing:-0.61px">ADMIN</div>
<div class="t gc" style="left:239px;top:366px;letter-spacing:-0.61px">ADMIN</div>
<div class="t gc" style="left:314px;top:366px;letter-spacing:-0.01px">Awaiting Re...</div>
<div class="t gc" style="left:389px;top:366px;letter-spacing:0.18px">12/4/2015 ...</div>
<div class="t gc" style="left:464px;top:366px;letter-spacing:-1.39px">MON</div>
<div class="a cb" style="left:567px;top:367px"></div>
<div class="a cb" style="left:717px;top:367px"></div>
<div class="a cb" style="left:792px;top:367px"></div>
<div class="a cb" style="left:867px;top:367px"></div>
<div class="a cb" style="left:942px;top:367px"></div>
<div class="t gc" style="right:919.9px;top:386px;margin-right:0.8px;letter-spacing:-0.38px">47</div>
<div class="t gc" style="right:844.9px;top:386px;margin-right:0.8px;letter-spacing:-0.38px">12</div>
<div class="t gc" style="left:164px;top:386px;letter-spacing:-0.61px">ADMIN</div>
<div class="t gc" style="left:239px;top:386px;letter-spacing:-0.61px">ADMIN</div>
<div class="t gc" style="left:314px;top:386px;letter-spacing:-0.01px">Awaiting Re...</div>
<div class="t gc" style="left:389px;top:386px;letter-spacing:0.18px">12/4/2015 ...</div>
<div class="t gc" style="left:464px;top:386px;letter-spacing:-1.39px">MON</div>
<div class="a cb on" style="left:567px;top:387px"><svg width="12" height="12" viewBox="0 0 12 12"><path d="M2.6 5.6L4.9 9.2L9 2.4" fill="none" stroke="#3f659c" stroke-width="1.7"/></svg></div>
<div class="t gc" style="left:614px;top:386px;letter-spacing:-0.28px">117C6EEB....</div>
<div class="a cb on" style="left:717px;top:387px"><svg width="12" height="12" viewBox="0 0 12 12"><path d="M2.6 5.6L4.9 9.2L9 2.4" fill="none" stroke="#3f659c" stroke-width="1.7"/></svg></div>
<div class="a cb" style="left:792px;top:387px"></div>
<div class="a cb" style="left:867px;top:387px"></div>
<div class="a cb" style="left:942px;top:387px"></div>
<div class="t gc" style="right:919.9px;top:406px;margin-right:0.8px;letter-spacing:-0.37px">1050</div>
<div class="t gc" style="right:844.9px;top:406px;margin-right:0.8px;letter-spacing:-0.38px">13</div>
<div class="t gc" style="left:164px;top:406px;letter-spacing:-0.61px">ADMIN</div>
<div class="t gc" style="left:239px;top:406px;letter-spacing:-0.61px">ADMIN</div>
<div class="t gc" style="left:314px;top:406px;letter-spacing:-0.01px">Awaiting Re...</div>
<div class="t gc" style="left:389px;top:406px;letter-spacing:0.18px">12/4/2015 ...</div>
<div class="t gc" style="left:464px;top:406px;letter-spacing:-1.39px">MON</div>
<div class="a cb on" style="left:567px;top:407px"><svg width="12" height="12" viewBox="0 0 12 12"><path d="M2.6 5.6L4.9 9.2L9 2.4" fill="none" stroke="#3f659c" stroke-width="1.7"/></svg></div>
<div class="a cb on" style="left:717px;top:407px"><svg width="12" height="12" viewBox="0 0 12 12"><path d="M2.6 5.6L4.9 9.2L9 2.4" fill="none" stroke="#3f659c" stroke-width="1.7"/></svg></div>
<div class="a cb" style="left:792px;top:407px"></div>
<div class="a cb" style="left:867px;top:407px"></div>
<div class="a cb" style="left:942px;top:407px"></div>

<!-- ===== h scrollbar ===== -->
<div class="a" style="left:10px;top:660px;width:980px;height:18px;background:linear-gradient(#f3f3f3,#ececec);border-top:1px solid #e6e6e6"></div>
<svg class="a" style="left:16px;top:664px" width="5" height="10" viewBox="0 0 5 10"><path d="M5 0V10L0 5Z" fill="#3d5080"/></svg>
<svg class="a" style="left:979px;top:664px" width="5" height="10" viewBox="0 0 5 10"><path d="M0 0V10L5 5Z" fill="#3d5080"/></svg>
<div class="a" style="left:28px;top:661px;width:159px;height:15px;border:1px solid #556b93;border-radius:2px;background:linear-gradient(#eef2f7 0,#dfe5ee 5px,#b9c5d6 9px,#cdd6e3 100%);box-shadow:inset 0 0 0 1px #f4f6fa"></div>
<div class="a" style="left:104px;top:665px;width:8px;height:7px;background:repeating-linear-gradient(90deg,#44587e 0 1px,transparent 1px 2px)"></div>

<!-- ===== status bar ===== -->
<div class="a" style="left:8px;top:683px;width:987px;height:23px;border-top:1px solid #6c8cc0;background:linear-gradient(#f0f6fd 0,#d9e6f8 1px,#d3e2f7 7px,#b3cef0 8px,#c3d8f4 16px,#d8e6f9 100%)"></div>
<div class="t" style="left:11.6px;top:688px;letter-spacing:-0.15px">atlas (Admin Library)</div>
<div class="a" style="left:116px;top:686px;width:1px;height:18px;background:#90b0de"></div>
<div class="a" style="left:117px;top:686px;width:1px;height:18px;background:#f2f7fd"></div>
<div class="t" style="left:122px;top:688px;letter-spacing:-0.2px">4 records</div>
<div class="a" style="left:963px;top:684px;width:32px;height:22px;border-left:1px solid #7d9dd2;background:linear-gradient(#c6daf5 0,#a9c6ef 5px,#8fb2e6 8px,#7f9fd2 100%);box-shadow:inset 1px 0 0 #e6effb"></div>
<svg class="a" style="left:981px;top:691px" width="12" height="12" viewBox="0 0 12 12" fill="#fff"><rect x="8" y="0.5" width="2" height="2"/><rect x="4.5" y="4.5" width="2" height="2"/><rect x="8" y="4.5" width="2" height="2"/><rect x="1" y="8.5" width="2" height="2"/><rect x="4.5" y="8.5" width="2" height="2"/><rect x="8" y="8.5" width="2" height="2"/></svg>

</body>
</html>
